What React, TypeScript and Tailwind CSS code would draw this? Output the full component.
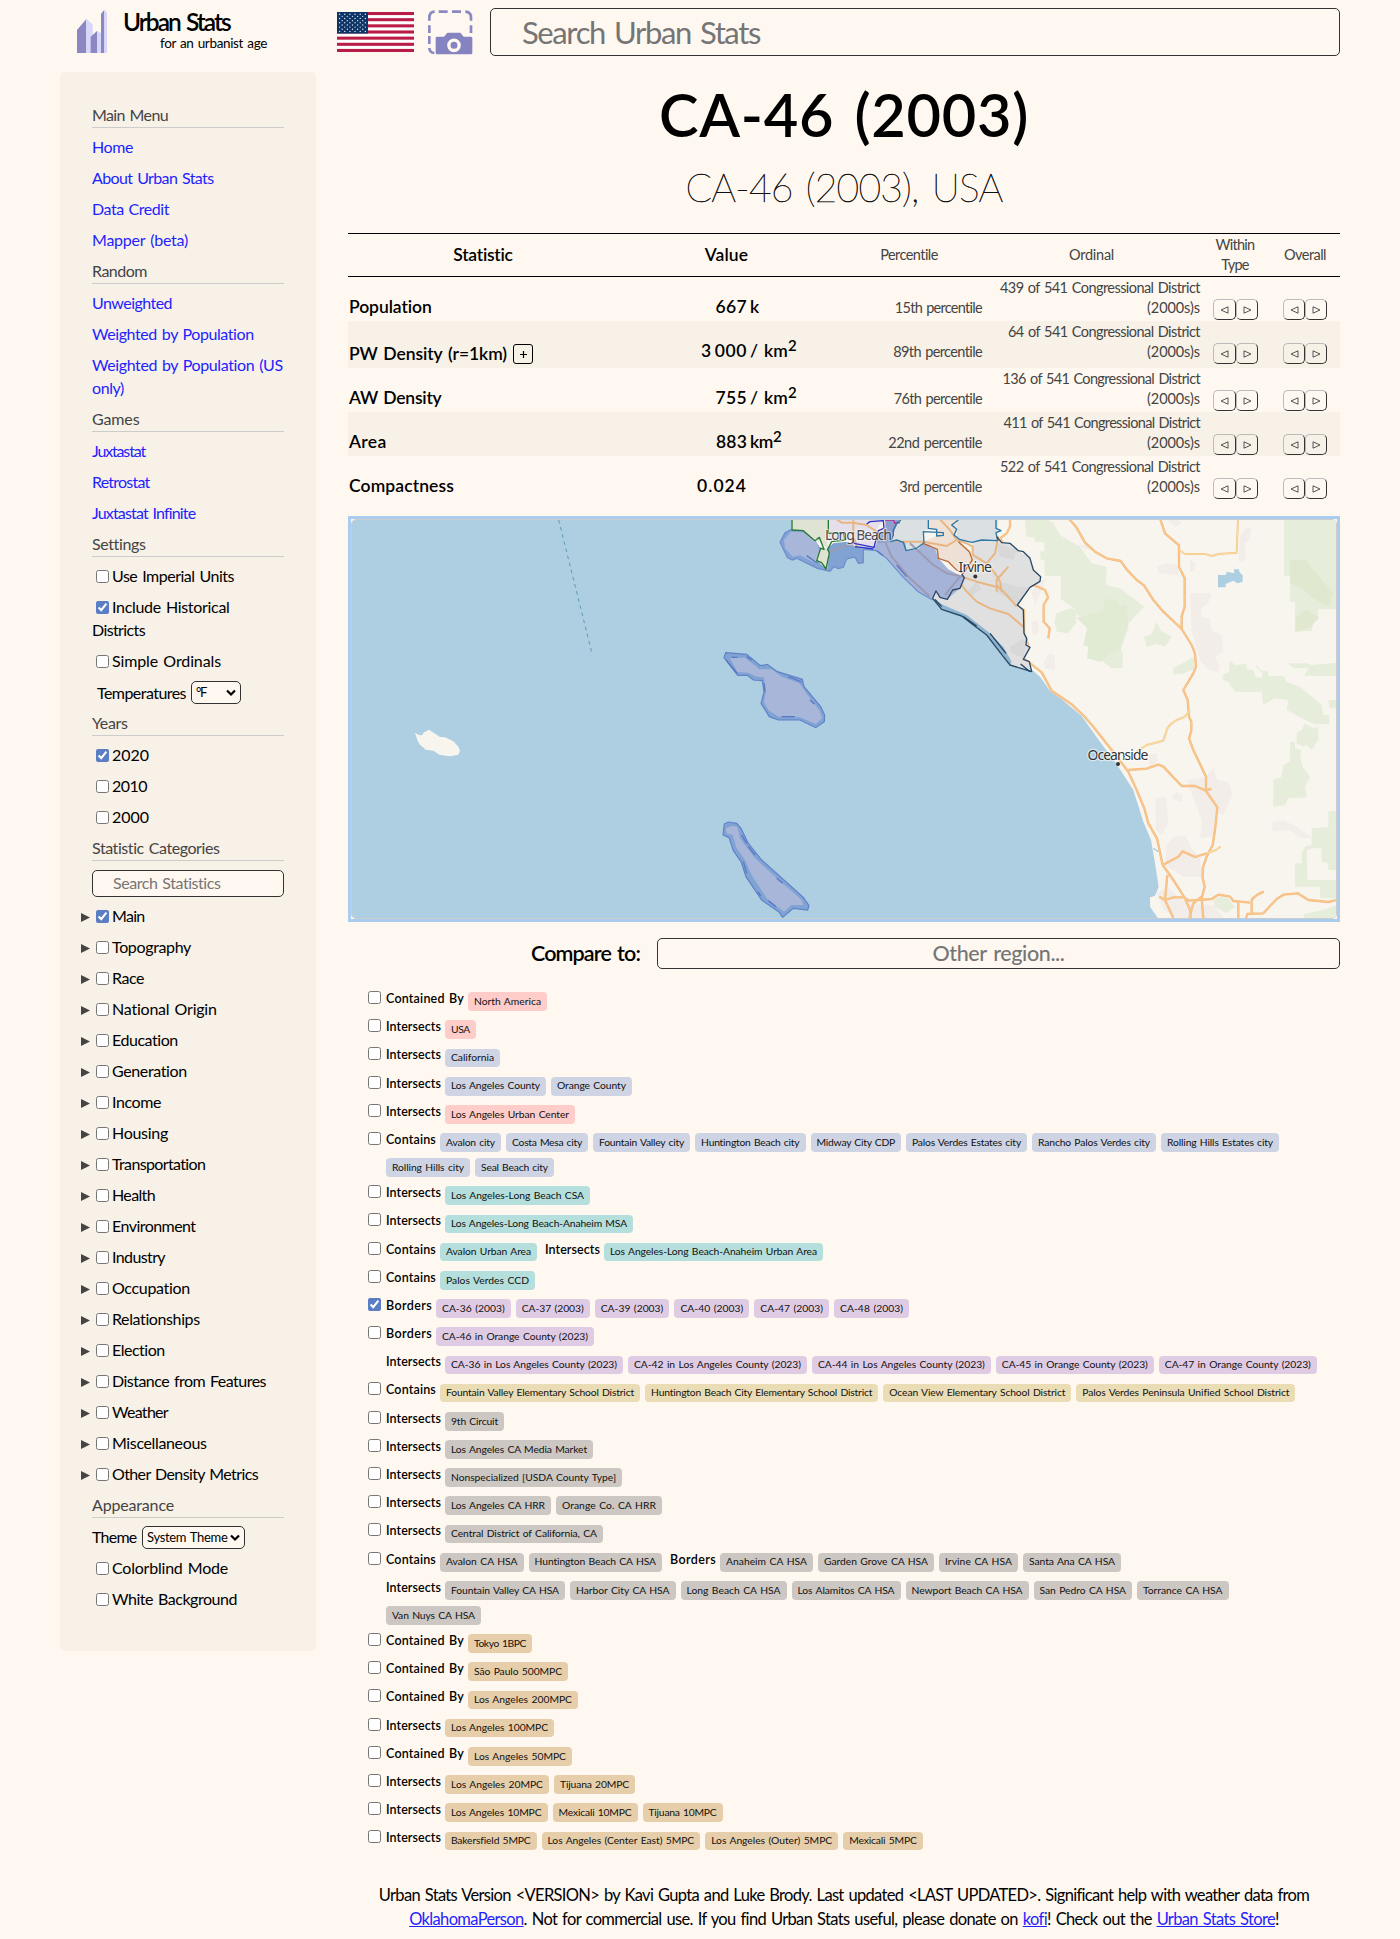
import React, { useLayoutEffect, useRef, useState } from "react";

/** Text set to a given width: the letter spacing is measured and adjusted on mount. */
function Fit({ w, className = "", children }: { w: number; className?: string; children: React.ReactNode }) {
  const ref = useRef<HTMLSpanElement>(null);
  const [spacing, setSpacing] = useState(0);
  useLayoutEffect(() => {
    const el = ref.current;
    if (!el) return;
    const n = (el.textContent || "").length;
    el.style.letterSpacing = "0px";
    const natural = el.getBoundingClientRect().width;
    const s = (w - natural) / n;
    el.style.letterSpacing = s + "px";
    setSpacing(s);
  }, [w]);
  return (
    <span ref={ref} className={"inline-block whitespace-nowrap [word-spacing:0.08em] " + className} style={{ letterSpacing: spacing }}>
      {children}
    </span>
  );
}

function Check({ on = false, className = "" }: { on?: boolean; className?: string }) {
  return (
    <input
      type="checkbox"
      checked={on}
      readOnly
      className={"h-[13px] w-[13px] shrink-0 accent-[#5a7dc3] " + className}
    />
  );
}

/* ---------- header ---------- */

function Logo() {
  return (
    <svg viewBox="78 27 96 135" className="h-[45px] w-8 shrink-0">
      <path d="M81 90L109 57V159H81Z" fill="#8a87c2" />
      <path d="M109 57L128 73V159H109Z" fill="#d8d7fb" />
      <path d="M122 110L141 93V159H122Z" fill="#8a87c2" />
      <path d="M141 93L153 99V159H141Z" fill="#d8d7fb" />
      <path d="M153 41L163 29V159H153Z" fill="#8a87c2" />
      <path d="M163 29L171 38V159H163Z" fill="#d8d7fb" />
    </svg>
  );
}

function Flag() {
  const stars: React.ReactNode[] = [];
  for (let r = 0; r < 9; r++) {
    const n = r % 2 === 0 ? 6 : 5;
    for (let c = 0; c < n; c++) {
      stars.push(
        <circle key={r + "-" + c} cx={2.6 + c * 5.15 + (r % 2) * 2.57} cy={2.2 + r * 2.15} r={0.68} fill="#e8edf5" />
      );
    }
  }
  return (
    <svg viewBox="0 0 77 40" preserveAspectRatio="none" className="h-10 w-[77px] shrink-0">
      <rect width="77" height="40" fill="#fff" />
      {[0, 2, 4, 6, 8, 10, 12].map((i) => (
        <rect key={i} y={(i * 40) / 13} width="77" height={40 / 13} fill="#b91d47" />
      ))}
      <rect width="31" height="21.5" fill="#0d3466" />
      {stars}
    </svg>
  );
}

function Camera() {
  return (
    <svg viewBox="1134 29 135 135" className="h-[45px] w-[45px] shrink-0">
      <g fill="none" stroke="#8a89c4" strokeWidth="8">
        <path d="M1138 61V53Q1138 34 1154 34M1166 34H1193M1206 34H1233M1246 34Q1263 35 1263 52V61M1138 75V98M1138 107V131M1263 75V98M1138 143Q1139 157 1153 158" />
      </g>
      <path
        d="M1157 112Q1157 109 1162 109H1182L1192 97H1231L1241 109H1262Q1267 109 1267 113V158Q1267 162 1262 162H1162Q1157 162 1157 158Z"
        fill="#8584c0"
      />
      <circle cx="1212" cy="135" r="15.5" fill="#8584c0" stroke="#fff8f0" strokeWidth="10" />
    </svg>
  );
}

function Header() {
  return (
    <header className="flex h-16 items-start pt-2">
      <div className="flex w-[277px] shrink-0 pl-4 pt-px">
        <Logo />
        <div className="ml-[15px] flex flex-col">
          <Fit w={129} className="h-[30px] text-[24.5px] font-semibold leading-[26px]">Urban Stats</Fit>
          <Fit w={107} className="-mt-[4px] ml-[37px] text-[13.5px] leading-4">for an urbanist age</Fit>
        </div>
      </div>
      <div className="pt-1"><Flag /></div>
      <div className="ml-[14px] pt-0.5"><Camera /></div>
      <div className="ml-[17px] flex h-12 w-[850px] items-center rounded-[5px] border border-[#333] pl-[31px] text-[31px] text-[#757575]">
        <Fit w={238}>Search Urban Stats</Fit>
      </div>
    </header>
  );
}

/* ---------- sidebar ---------- */

function Heading({ w, children }: { w: number; children: string }) {
  return (
    <div className="mb-2 h-6 border-b border-[#ccc] leading-[21px] text-[#444]">
      <Fit w={w}>{children}</Fit>
    </div>
  );
}

function SideLink({ lines }: { lines: [string, number][] }) {
  return (
    <a className="-mt-px mb-[9px] flex flex-col items-start leading-[23px] text-[#1f1fff]">
      {lines.map(([t, w]) => (
        <Fit key={t} w={w}>{t}</Fit>
      ))}
    </a>
  );
}

function Option({ label, w, on, arrow }: { label: string; w: number; on?: boolean; arrow?: boolean }) {
  return (
    <div className="mb-2 flex h-[23px] items-center leading-[21px]">
      {arrow && (
        <svg viewBox="0 0 9 9" className="-ml-[11px] mr-0.5 mt-0.5 h-[9px] w-[9px]">
          <path d="M0 0L9 4.5L0 9Z" fill="#444" />
        </svg>
      )}
      <Check on={on} className="ml-1 mr-[3px]" />
      <Fit w={w} className="pb-0.5">{label}</Fit>
    </div>
  );
}

function Select({ className, w, label }: { className: string; w: number; label: string }) {
  return (
    <span className={"flex h-[23px] items-center justify-between rounded-[5px] border border-[#333] bg-[#fff8f0] pl-1 pr-1 text-[13px] " + className}>
      <Fit w={w}>{label}</Fit>
      <svg viewBox="0 0 10 8" className="h-2 w-[10px]">
        <path d="M1 1.5L5 5.5L9 1.5" fill="none" stroke="#000" strokeWidth="2.2" />
      </svg>
    </span>
  );
}

const categories: [string, number][] = [
  ["Main", 32.5], ["Topography", 79], ["Race", 32], ["National Origin", 105], ["Education", 66],
  ["Generation", 75], ["Income", 49], ["Housing", 56], ["Transportation", 93.5], ["Health", 43],
  ["Environment", 83.5], ["Industry", 53], ["Occupation", 78], ["Relationships", 88], ["Election", 53],
  ["Distance from Features", 154], ["Weather", 56], ["Miscellaneous", 94.5], ["Other Density Metrics", 146],
];

function Sidebar() {
  return (
    <nav className="h-[1579px] w-64 shrink-0 rounded-[5px] bg-[#f7f1e7] p-8">
      <Heading w={76}>Main Menu</Heading>
      <SideLink lines={[["Home", 41]]} />
      <SideLink lines={[["About Urban Stats", 121.5]]} />
      <SideLink lines={[["Data Credit", 77]]} />
      <SideLink lines={[["Mapper (beta)", 96]]} />
      <Heading w={55}>Random</Heading>
      <SideLink lines={[["Unweighted", 80]]} />
      <SideLink lines={[["Weighted by Population", 162]]} />
      <SideLink lines={[["Weighted by Population (US", 191], ["only)", 32]]} />
      <Heading w={47.5}>Games</Heading>
      <SideLink lines={[["Juxtastat", 53]]} />
      <SideLink lines={[["Retrostat", 57.5]]} />
      <SideLink lines={[["Juxtastat Infinite", 103]]} />
      <Heading w={53}>Settings</Heading>
      <Option label="Use Imperial Units" w={122} />
      <div className="mb-2">
        <div className="flex h-[23px] items-center leading-[21px]">
          <Check on className="ml-1 mr-[3px]" />
          <Fit w={117.5} className="pb-0.5">Include Historical</Fit>
        </div>
        <div className="h-[23px] leading-[21px]"><Fit w={53}>Districts</Fit></div>
      </div>
      <Option label="Simple Ordinals" w={109} />
      <div className="mb-2 flex h-[23px] items-center pl-[5px]">
        <Fit w={89}>Temperatures</Fit>
        <Select className="ml-[5px] w-[50px]" w={10} label="°F" />
      </div>
      <Heading w={35.5}>Years</Heading>
      <Option label="2020" w={37} on />
      <Option label="2010" w={35} />
      <Option label="2000" w={37} />
      <Heading w={128}>Statistic Categories</Heading>
      <div className="mb-2 mt-[9px] flex h-[27px] items-center rounded-[5px] border border-[#333] bg-[#fff8f0] pb-0.5 pl-5 text-[#757575]">
        <Fit w={108}>Search Statistics</Fit>
      </div>
      {categories.map(([t, w]) => (
        <Option key={t} label={t} w={w} on={t === "Main"} arrow />
      ))}
      <Heading w={82}>Appearance</Heading>
      <div className="mb-2 flex h-[23px] items-center">
        <Fit w={44.5} className="pb-px">Theme</Fit>
        <Select className="ml-[5.5px] w-[103px]" w={80.5} label="System Theme" />
      </div>
      <Option label="Colorblind Mode" w={116} />
      <Option label="White Background" w={125} />
    </nav>
  );
}

/* ---------- statistics table ---------- */

function Pager({ first, second }: { first: string; second: string }) {
  const b =
    "flex h-[21px] items-center justify-center rounded-[5px] border border-b-[#333] border-l-[#bbb] border-r-[#333] border-t-[#bbb] ";
  return (
    <div className="flex pt-[22px]">
      <span className={b + first}>
        <svg viewBox="0 0 9 8" className="mt-px h-2 w-[9px]"><path d="M8 .8V7.2L1 4Z" fill="none" stroke="#444" strokeWidth=".9" /></svg>
      </span>
      <span className={b + second}>
        <svg viewBox="0 0 9 8" className="mt-px h-2 w-[9px]"><path d="M1 .8V7.2L8 4Z" fill="none" stroke="#444" strokeWidth=".9" /></svg>
      </span>
    </div>
  );
}

type Stat = {
  name: string; nameW: number; value: React.ReactNode; valueW: number; unit?: string; unitW?: number;
  sup?: boolean; pct: string; pctW: number; ord: string; ordW: number; expand?: boolean;
};

const stats: Stat[] = [
  { name: "Population", nameW: 83, value: "667", valueW: 31.5, unit: "k", unitW: 9, pct: "15th percentile", pctW: 87.5, ord: "439 of 541 Congressional District", ordW: 200 },
  { name: "PW Density (r=1km)", nameW: 158, value: <><span className="mr-[3px]">3</span>000</>, valueW: 46, unit: "/ km", unitW: 38, sup: true, pct: "89th percentile", pctW: 89, ord: "64 of 541 Congressional District", ordW: 192, expand: true },
  { name: "AW Density", nameW: 92.5, value: "755", valueW: 31.5, unit: "/ km", unitW: 38, sup: true, pct: "76th percentile", pctW: 88.5, ord: "136 of 541 Congressional District", ordW: 197.5 },
  { name: "Area", nameW: 37.5, value: "883", valueW: 31, unit: "km", unitW: 23, sup: true, pct: "22nd percentile", pctW: 94, ord: "411 of 541 Congressional District", ordW: 196.5 },
  { name: "Compactness", nameW: 105, value: "0.024", valueW: 50, pct: "3rd percentile", pctW: 83, ord: "522 of 541 Congressional District", ordW: 200 },
];

function StatsTable() {
  const cols = "grid grid-cols-[270px_217px_148px_217px_70px_70px] ";
  return (
    <section>
      <div className={cols + "h-11 items-center justify-items-center border-y border-black text-[14.5px] leading-5 text-[#444]"}>
        <Fit w={60} className="text-[17.5px] font-semibold text-black">Statistic</Fit>
        <Fit w={43.5} className="text-[17.5px] font-semibold text-black">Value</Fit>
        <Fit w={58}>Percentile</Fit>
        <Fit w={45}>Ordinal</Fit>
        <div className="flex flex-col items-center">
          <Fit w={39}>Within</Fit>
          <Fit w={27.5}>Type</Fit>
        </div>
        <Fit w={42}>Overall</Fit>
      </div>
      {stats.map((s, i) => (
        <div
          key={s.name}
          className={cols + "items-start text-[14.5px] leading-5 text-[#444] " + (i % 2 ? "bg-[#f7f1e7] " : "") + (s.expand ? "h-[47px]" : "h-11")}
        >
          <div className={"flex pl-px text-[17.5px] font-semibold text-black " + (s.expand ? "pt-[23px]" : "pt-5")}>
            <Fit w={s.nameW}>{s.name}</Fit>
            {s.expand && (
              <span className="ml-1.5 flex h-5 w-5 items-center justify-center rounded-[3px] border border-black">
                <svg viewBox="0 0 7 7" className="h-[7px] w-[7px]"><path d="M3.5 0V7M0 3.5H7" stroke="#000" strokeWidth="1.2" /></svg>
              </span>
            )}
          </div>
          <div className="flex pt-5 text-[17.5px] font-semibold text-black">
            <div className="w-[129px] shrink-0 text-right"><Fit w={s.valueW}>{s.value}</Fit></div>
            {s.unit && <Fit w={s.unitW || 0} className="ml-[3px]">{s.unit}</Fit>}
            {s.sup && <span className="-mt-1.5 text-[15px]">2</span>}
          </div>
          <div className="pr-px pt-[21px] text-right"><Fit w={s.pctW}>{s.pct}</Fit></div>
          <div className="flex flex-col items-end pt-px">
            <Fit w={s.ordW}>{s.ord}</Fit>
            <Fit w={53}>(2000s)s</Fit>
          </div>
          <div className="pl-[13px]"><Pager first="w-[23px]" second="w-[22px]" /></div>
          <div className="pl-[13px]"><Pager first="w-[22px]" second="w-[22px]" /></div>
        </div>
      ))}
    </section>
  );
}

/* ---------- map ---------- */

const roadsEast = [
  "M208 28L228 50L255 98L285 125L320 145L362 153L380 178L410 210L432 226L460 270L490 305L545 357L575 405L585 430L588 470L580 490L550 540L563 570L567 620L574 635L574 662L567 685L580 720L618 800V843L652 892L645 960L638 1005L620 1040L608 1075L608 1105L614 1130L605 1165L610 1224",
  "M481 28L495 70L537 106V170L554 205V290L545 320V357",
  "M30 28V50L20 70L0 85",
  "M0 85L20 115L28 135V165L0 208M28 172L65 198L90 220L135 240L144 262L131 285V335L149 355L145 385",
  "M0 228L20 256L50 288L72 300V370L85 405L70 445L95 463L125 487L155 542L215 583L252 618L280 650L335 720L385 785L410 840L433 895L445 940L471 985L488 1065L520 1110L555 1165L570 1200L572 1224",
  "M0 310Q30 315 50 340L72 352",
  "M385 780L440 776L475 764L490 770L545 828L585 828L618 842L634 836",
  "M488 1065L535 1040L548 1024L585 1041L620 1030",
  "M502 1095L495 1170L520 1224M478 1160L495 1170L520 1162H550L568 1172L635 1167L655 1154L690 1160L700 1173L750 1178M715 1175V1224M738 1224L742 1212L790 1210L830 1167L850 1154L893 1150L925 1170L985 1176L1010 1170M755 1212V1170Q765 1155 792 1145M568 1224L580 1180L605 1160",
];
const yellowRoads = [
  "M537 120L555 132H615L635 138L655 132L710 128L714 28",
  "M410 725L440 705L490 692L502 655Q520 630 552 622L570 602",
  "M620 1030L648 1020L662 1010",
];
const roadsWest = [
  "M410 28L425 38H460L500 45L530 65M460 30V80L475 120M380 130L430 110L460 108",
  "M720 28L750 60L770 90L800 100L818 110V135L860 160L885 190L900 215L905 245M575 95H670L740 108L770 90M820 135L860 160L885 130L895 80",
  "M770 195L830 215L905 235M785 225L800 245L830 275L870 295L925 312L970 350M925 170L890 210V245M890 225L920 255L950 290",
];
const greens = [
  "M75 28L78 80L103 82L105 95L133 97V122L120 125L122 150H133L135 198H183V268L228 300L230 315L248 320L262 360L252 405L265 410L262 445L310 455L335 475H368V425L362 420L385 355V340L433 290L360 235L318 225V200L320 185L318 170L275 160L240 110L180 75L160 40L140 28Z",
  "M163 335L170 310L210 295L228 300V340L205 370L170 365Z",
  "M432 380L455 372L470 335L483 362L515 380L495 410L470 402L440 410Z",
  "M520 475L582 440V478L545 492H520Z",
  "M668 495L688 485V450L705 465L740 462V478L760 480L768 500L785 505L788 490L770 475L768 462L780 480L805 485V498H850L860 515L900 530L965 585L970 615H988V643H945L915 630L870 605L860 600L865 570L825 565L790 585L785 545H705L685 515L668 510Z",
  "M865 460H920L935 465L1010 458V497H912L925 475L880 475Z",
  "M852 28V198H870V275H852V200H852V275H885V365L935 362L940 335L955 330L955 298H1010V28Z",
  "M870 695L885 695V715L905 720L900 740L908 770L930 800L915 830L920 862L865 865L855 885L820 890V810L845 800L850 765L870 755Z",
  "M890 670L905 660L915 640L940 655L955 650L955 690L935 720L920 705L910 710L890 700Z",
  "M985 903H1010V1080H985V1060L965 1055V1015H940L920 1020L922 1110H1010V1165H960L960 1130H885V1060L905 1060V1030L915 1010L935 1005V955L985 952Z",
  "M640 1170L660 1160L685 1165L705 1190L680 1210L645 1190Z",
  "M912 1224V1212L970 1200L1010 1185V1224Z",
  "M985 570H1010V595H988Z",
];
const urban = [
  "M570 250H635L625 280L605 295V320L630 325L635 360L665 375L670 425L645 440L660 470L655 485L630 483L600 450L575 365Z",
  "M720 80L740 50L755 55L748 90L735 100L738 150L715 155Z",
  "M470 170L500 160L535 165V195L475 190Z",
  "M570 148L588 160L585 180L570 188Z",
  "M95 335L112 330L118 360L105 378L95 365Z",
  "M130 455L148 430L165 435L165 480L135 475Z",
  "M105 225L140 205L125 240L105 285L95 250Z",
  "M465 865L500 860V890L505 940L485 975L468 960Z",
  "M515 860L530 845L550 855L545 875L520 870Z",
  "M440 735L470 730L472 755L450 770Z",
  "M560 810L615 800L640 775L652 810L685 815L698 855L670 915L645 905L640 980L600 985L605 930Z",
  "M500 1005L520 980L555 975L575 1015L600 1045L605 1100L550 1100L495 1065Z",
  "M230 105L270 105L285 120L260 118Z",
  "M500 28L535 28L545 40L525 52Z",
  "M812 938L850 930L890 950L938 985L905 985L870 960L820 965Z",
  "M470 1150L500 1130L560 1180L640 1185L670 1224H530L490 1200Z",
];

function MapView() {
  return (
    <div className="mt-4 h-[406px] border-[3px] border-[#aaccee] bg-[#fff8f0]">
      <svg viewBox="352 520 984 398" preserveAspectRatio="none" className="block h-[400px] w-[986px] rounded-[5px] border border-[#ccc]" fontFamily="'Noto Sans', 'Open Sans', sans-serif">
        <rect x="351" y="519" width="986" height="400" fill="#aecfe1" />
        <g transform="translate(340 510) scale(.33333)">
          <path d="M656 30L754 422L751 436" fill="none" stroke="#5d9cb5" strokeWidth="3" strokeDasharray="11 11" />
          <path d="M225 668L238 676L248 675L250 668L267 659L300 681L315 682L340 694L355 710L360 722L355 734L330 739L298 734L280 722L257 719L238 702L232 690Z" fill="#f8f5ef" />
        </g>
        <g transform="translate(1000 510) scale(.33333)">
          <path d="M-625 20V62L-645 75L-650 100L-632 140L-600 140L-550 170L-520 178L-510 135L-480 110L-440 105L-430 110L-370 110L-330 150L-280 205L-200 265L-180 290L-110 320L-60 360L-30 380L5 425L30 458L85 470L120 500L150 542L185 568L245 618L300 695L345 755L400 840L430 935L453 990L465 1060L476 1130L465 1157L450 1162V1190L475 1226H1015V20Z" fill="#f8f5ef" />
          <g fill="#f2ede9">{urban.map((d) => <path key={d} d={d} />)}</g>
          <g fill="#e6eddb">{greens.map((d) => <path key={d} d={d} />)}</g>
          <path d="M228 322L250 318L310 300L315 268L352 270L360 290L380 282L385 340L365 400L355 425L330 430L300 455L262 445L265 410L250 405L262 355Z" fill="#e1ead2" />
          <path d="M870 150L920 150L940 180L1000 250L985 290L940 265L905 235L870 220Z" fill="#e0e9cf" />
          <path d="M887 325L920 298L955 322L935 350L887 365Z" fill="#e0e9cf" />
          <path d="M654 195H678L680 185L703 190L702 178H717L718 186L728 196V215L712 220L700 212L677 222V232H654Z" fill="#aecfe1" />
          <path d="M460 1015L475 1025" stroke="#aecfe1" strokeWidth="4" />
          <g fill="none" stroke="#f0b97e" strokeWidth="7" strokeLinejoin="round">{roadsEast.map((d) => <path key={d} d={d} />)}</g>
          <g fill="none" stroke="#fcc68b" strokeWidth="4" strokeLinejoin="round">{roadsEast.map((d) => <path key={d} d={d} />)}</g>
          <g fill="none" stroke="#f1c286" strokeWidth="6" strokeLinejoin="round">{yellowRoads.map((d) => <path key={d} d={d} />)}</g>
          <g fill="none" stroke="#fde0a0" strokeWidth="3.2" strokeLinejoin="round">{yellowRoads.map((d) => <path key={d} d={d} />)}</g>
        </g>
        <g transform="translate(700 510) scale(.33333)">
          <path d="M275 20V58L310 62L350 90L382 115L385 28Z" fill="#dee3d4" />
          <path d="M385 20V95L435 90L462 95L465 108L520 115L530 90L525 65L550 30V20Z" fill="#e5dfeb" />
          <path d="M530 20L556 32V60L530 70V110L560 140L600 140L620 120L625 95L575 95L585 60L600 28Z" fill="#8f9fcb" />
          <path d="M600 20L575 95H615L620 122L655 115L670 98L672 60L690 58L685 20Z" fill="#dbe0e2" />
          <path d="M685 20L682 55L705 60L710 78L670 95L700 110L740 112L765 95L770 55V20Z" fill="#efe1d6" />
          <path d="M770 20V92L815 97L890 92L895 28Z" fill="#dadfe2" />
          <path d="M670 98L705 110L715 145L745 155L790 190L817 155L812 125L775 92Z" fill="#eee0d4" />
          <path d="M817 97L890 92L905 98L930 100L955 122L990 145L1000 180L1022 200L1020 214L990 232L952 285L970 300L972 370L980 400L990 412L970 448L990 460L995 480L930 465L860 375L785 318L725 298L698 265L705 245L742 268L795 200L785 190L817 155Z" fill="#e0e0e0" />
          <path d="M698 265L725 298L785 318L860 375L910 440L930 465L935 455L910 410L868 368L800 315L730 285Z" fill="#8fb4cf" />
          <path d="M900 215L950 230L990 232L952 285L890 245ZM930 410L970 385L980 400L970 445L930 425ZM890 100L950 120L940 150L900 140ZM800 245L830 215L845 235L810 262Z" fill="#d8d8d8" />
          <g fill="none" stroke="#e8b683" strokeWidth="6" strokeLinejoin="round">{roadsWest.map((d) => <path key={d} d={d} />)}</g>
          <path d="M275 58L255 68L240 97L262 143L277 150L290 145L352 175L390 184L402 170L415 176L430 172L440 147L465 141L475 160L490 158V118L460 108L440 95L400 100L380 118L360 112L345 92L310 62Z" fill="#81a3d3" />
          <path d="M272 65L252 90L255 115L278 140L300 136L352 163L348 148L360 128L350 95L308 66Z" fill="#a8b6da" />
          <path d="M520 118L560 145L610 200L655 245L698 267L708 245L720 260L742 267L780 235L793 203L745 178L715 145L705 115L670 98L655 118L620 122L610 96L575 95L530 100Z" fill="#a6b3d8" />
          <path d="M555 95L575 140L630 205L690 260M630 100L700 165L740 190L790 200M385 128L430 108L460 103M735 255L780 200" fill="none" stroke="#9c9bb5" strokeWidth="6" />
          <path d="M275 58L255 68L240 97L262 143L277 150L290 145L352 175L390 184L402 170L415 176L430 172L440 147L465 141L475 160L490 158V118L530 122L560 145L610 202L655 245L698 270" fill="none" stroke="#6d8bcb" strokeWidth="3.5" />
          <path d="M320 137L352 160M530 122L550 137M590 165L620 200" stroke="#5a78c4" strokeWidth="4" />
          <path d="M348 148L358 125L362 115L380 118L388 128L382 178L365 165Z" fill="#dfe4d2" />
          <g fill="none" strokeWidth="4" strokeLinejoin="round">
            <path d="M276 28V60L310 62L345 92L358 82L372 118L362 115L350 152L365 158L378 177L388 130L383 118L395 95L435 90L430 68L385 70V28" stroke="#277a33" />
            <path d="M500 42L510 35L550 32L552 55L535 62L522 112L462 100L460 85M465 110L520 117" stroke="#2c2fc4" />
            <path d="M555 30H580L585 40L600 38" stroke="#b52a97" />
            <path d="M603 30L590 40L580 60V75L572 95L590 90L610 97L618 122L650 115L672 98L670 65L730 68V76L710 78V58L685 55V30M775 30L755 45L770 58L762 75L778 88L815 97L845 90L893 92L888 68L903 62L888 55V30" stroke="#2b76a5" />
            <path d="M668 100L690 108L712 118L715 145L745 155L770 180L790 190L803 170L817 150L808 125L775 95" stroke="#bd6b35" />
            <path d="M890 80L905 98L930 100L955 122L970 125L990 145L1000 180L1022 200L1020 214L990 232L952 285L970 300L972 370L980 385L978 405L990 412L970 448L988 455L995 485L930 465L910 440L860 375L820 345L785 318L725 298L698 265L708 243L720 262L742 268L758 240L780 235L793 203L785 192" stroke="#2a4a66" />
            <path d="M705 268L725 290M790 320L830 348M870 370L918 430M962 462L990 485" stroke="#24435f" />
          </g>
          <g>
            <path d="M77 428L140 433L180 466H190L202 463L232 485L307 508L312 530L362 590L374 615L373 635L347 653L300 630H235L208 620L183 580L192 545L187 512L160 510L142 496H113L72 443Z" fill="#81a3d3" stroke="#5f82c8" strokeWidth="3.5" />
            <path d="M90 445L135 443L178 478H215L245 500L298 520L325 558L358 600L366 625L347 642L300 622L235 620L205 600L192 575L198 545L192 502L170 500L145 488L112 486Z" fill="#a8b6da" />
            <path d="M95 442H112M78 450L112 490M265 500L305 516M330 570L343 582M245 620H285M140 440L155 450M192 520L195 545" stroke="#5878c4" strokeWidth="4" />
          </g>
        </g>
        <g transform="translate(340 510) scale(.33333)">
          <path d="M1153 942L1165 936L1190 940L1203 955L1225 1000L1265 1050L1390 1162L1407 1187L1403 1200L1360 1195L1328 1222L1318 1207L1265 1170L1218 1100L1203 1055L1180 1022L1167 983L1149 975Z" fill="#81a3d3" stroke="#5f82c8" strokeWidth="3.5" />
          <path d="M1158 955L1175 948L1192 950L1200 985L1245 1045L1300 1095L1385 1170L1390 1185L1355 1185L1332 1205L1280 1165L1235 1095L1215 1050L1190 1015L1178 975L1160 970Z" fill="#a8b6da" />
          <path d="M1205 975L1220 1000M1225 1010L1245 1035M1310 1105L1328 1120M1210 1055L1220 1090M1285 1172L1308 1190M1253 1145L1262 1158" stroke="#5878c4" strokeWidth="4" />
        </g>
        <g fontSize="14" fill="#333" stroke="#ffffff" strokeOpacity=".55" strokeWidth="2.5" paintOrder="stroke" strokeLinejoin="round">
          <text x="825" y="540" textLength="67" opacity=".85">Long Beach</text>
          <text x="958.5" y="572" textLength="33.5">Irvine</text>
          <text x="1087.5" y="760" textLength="61">Oceanside</text>
        </g>
        <circle cx="975.3" cy="576.5" r="2" fill="#333" />
        <circle cx="1118" cy="764" r="2" fill="#333" />
      </svg>
    </div>
  );
}

/* ---------- related regions ---------- */

const kinds = {
  pink: "bg-[#fecdca]",
  blue: "bg-[#ced4e4]",
  teal: "bg-[#b5dfdc]",
  purple: "bg-[#e0cbe4]",
  yellow: "bg-[#eaddb5]",
  gray: "bg-[#ccc7c3]",
  orange: "bg-[#e7ceaa]",
};
type Kind = keyof typeof kinds;
type Chip = [string, number];
type Group = { rel?: string; chips: Chip[] };
type Line = { kind: Kind; box?: boolean; on?: boolean; wrap?: boolean; groups: Group[] };

const relWidths: Record<string, number> = { "Contained By": 78, Intersects: 55, Contains: 50, Borders: 46 };

const one = (kind: Kind, rel: string, ...chips: Chip[]): Line => ({ kind, box: true, groups: [{ rel, chips }] });

const lines: Line[] = [
  one("pink", "Contained By", ["North America", 79]),
  one("pink", "Intersects", ["USA", 31]),
  one("blue", "Intersects", ["California", 55]),
  one("blue", "Intersects", ["Los Angeles County", 101], ["Orange County", 81]),
  one("pink", "Intersects", ["Los Angeles Urban Center", 130]),
  one("blue", "Contains", ["Avalon city", 61], ["Costa Mesa city", 82], ["Fountain Valley city", 97], ["Huntington Beach city", 110.5], ["Midway City CDP", 90.5], ["Palos Verdes Estates city", 121], ["Rancho Palos Verdes city", 124], ["Rolling Hills Estates city", 118]),
  { kind: "blue", wrap: true, groups: [{ chips: [["Rolling Hills city", 84], ["Seal Beach city", 79]] }] },
  one("teal", "Intersects", ["Los Angeles-Long Beach CSA", 145]),
  one("teal", "Intersects", ["Los Angeles-Long Beach-Anaheim MSA", 188]),
  { kind: "teal", box: true, groups: [{ rel: "Contains", chips: [["Avalon Urban Area", 97]] }, { rel: "Intersects", chips: [["Los Angeles-Long Beach-Anaheim Urban Area", 219]] }] },
  one("teal", "Contains", ["Palos Verdes CCD", 95]),
  { kind: "purple", box: true, on: true, groups: [{ rel: "Borders", chips: [["CA-36 (2003)", 74.7], ["CA-37 (2003)", 74], ["CA-39 (2003)", 74.7], ["CA-40 (2003)", 75], ["CA-47 (2003)", 74.7], ["CA-48 (2003)", 75]] }] },
  one("purple", "Borders", ["CA-46 in Orange County (2023)", 158]),
  { kind: "purple", groups: [{ rel: "Intersects", chips: [["CA-36 in Los Angeles County (2023)", 178], ["CA-42 in Los Angeles County (2023)", 179], ["CA-44 in Los Angeles County (2023)", 178.8], ["CA-45 in Orange County (2023)", 158], ["CA-47 in Orange County (2023)", 158]] }] },
  one("yellow", "Contains", ["Fountain Valley Elementary School District", 200], ["Huntington Beach City Elementary School District", 233.3], ["Ocean View Elementary School District", 188], ["Palos Verdes Peninsula Unified School District", 219]),
  one("gray", "Intersects", ["9th Circuit", 59]),
  one("gray", "Intersects", ["Los Angeles CA Media Market", 148]),
  one("gray", "Intersects", ["Nonspecialized [USDA County Type]", 177]),
  one("gray", "Intersects", ["Los Angeles CA HRR", 106], ["Orange Co. CA HRR", 106]),
  one("gray", "Intersects", ["Central District of California, CA", 158]),
  { kind: "gray", box: true, groups: [{ rel: "Contains", chips: [["Avalon CA HSA", 83.5], ["Huntington Beach CA HSA", 133.5]] }, { rel: "Borders", chips: [["Anaheim CA HSA", 93], ["Garden Grove CA HSA", 116], ["Irvine CA HSA", 79], ["Santa Ana CA HSA", 98]] }] },
  { kind: "gray", groups: [{ rel: "Intersects", chips: [["Fountain Valley CA HSA", 120], ["Harbor City CA HSA", 105.5], ["Long Beach CA HSA", 106], ["Los Alamitos CA HSA", 109], ["Newport Beach CA HSA", 123], ["San Pedro CA HSA", 98.5], ["Torrance CA HSA", 91.5]] }] },
  { kind: "gray", wrap: true, groups: [{ chips: [["Van Nuys CA HSA", 95]] }] },
  one("orange", "Contained By", ["Tokyo 1BPC", 64]),
  one("orange", "Contained By", ["São Paulo 500MPC", 100]),
  one("orange", "Contained By", ["Los Angeles 200MPC", 110]),
  one("orange", "Intersects", ["Los Angeles 100MPC", 109]),
  one("orange", "Contained By", ["Los Angeles 50MPC", 104]),
  one("orange", "Intersects", ["Los Angeles 20MPC", 104], ["Tijuana 20MPC", 81]),
  one("orange", "Intersects", ["Los Angeles 10MPC", 102.5], ["Mexicali 10MPC", 85], ["Tijuana 10MPC", 80]),
  one("orange", "Intersects", ["Bakersfield 5MPC", 91.5], ["Los Angeles (Center East) 5MPC", 158.7], ["Los Angeles (Outer) 5MPC", 133], ["Mexicali 5MPC", 79.5]),
];

function Related() {
  return (
    <section className="mt-[22px] h-[868px] pl-5">
      {lines.map((l, i) => (
        <div key={i} className={"flex items-start " + (l.wrap ? "-mt-[3.2px] h-[28.2px]" : "h-[28.2px]")}>
          <div className="w-[18px] shrink-0">{l.box && <Check on={l.on} className="block" />}</div>
          {l.groups.map((g, j) => (
            <div key={j} className={"flex " + (j ? "ml-2" : "")}>
              {g.rel && (
                <Fit w={relWidths[g.rel]} className="mr-1 text-[12.5px] font-semibold leading-[15px]">{g.rel}</Fit>
              )}
              <div className="mt-[1.3px] flex gap-[5px]">
                {g.chips.map(([t, w]) => (
                  <span key={t} className={"flex h-[18.7px] items-center justify-center rounded-[4px] text-[10.3px] text-[#111] " + kinds[l.kind]} style={{ width: w }}>
                    <Fit w={w - 12}>{t}</Fit>
                  </span>
                ))}
              </div>
            </div>
          ))}
        </div>
      ))}
    </section>
  );
}

export default function App() {
  return (
    <div className="h-[1939px] w-[1400px] overflow-hidden bg-[#fff8f0] px-[60px] font-['Lato','Open_Sans',sans-serif] text-base text-black">
      <Header />
      <div className="mt-2 flex">
        <Sidebar />
        <main className="ml-8 w-[992px]">
          <div className="flex h-[86px] justify-center pt-0.5">
            <Fit w={370} className="text-[59.5px] font-semibold leading-[80px]">CA-46 (2003)</Fit>
          </div>
          <div className="flex h-[75px] justify-center">
            <Fit w={317} className="text-[39px] font-thin leading-[58px] [-webkit-text-stroke:0.5px_#111]">CA-46 (2003), USA</Fit>
          </div>
          <StatsTable />
          <MapView />
          <div className="mt-4 flex h-[31px] items-center">
            <div className="w-[292px] text-right"><Fit w={109} className="text-[21.5px] font-semibold">Compare to:</Fit></div>
            <div className="ml-[17px] flex h-[31px] flex-1 items-center justify-center rounded-[5px] border border-[#333] text-[21.5px] font-medium leading-7 text-[#757575]">
              <Fit w={132} className="pb-px">Other region...</Fit>
            </div>
          </div>
          <Related />
          <footer className="mt-[25px] flex flex-col items-center text-[16.5px] leading-[23.5px] text-black">
            <Fit w={930}>
              Urban Stats Version &lt;VERSION&gt; by Kavi Gupta and Luke Brody. Last updated &lt;LAST UPDATED&gt;. Significant help with weather data from
            </Fit>
            <Fit w={869}>
              <a className="text-[#1f1fff] underline">OklahomaPerson</a>. Not for commercial use. If you find Urban Stats useful, please donate on{" "}
              <a className="text-[#1f1fff] underline">kofi</a>! Check out the{" "}
              <a className="text-[#1f1fff] underline">Urban Stats Store</a>!
            </Fit>
          </footer>
        </main>
      </div>
    </div>
  );
}
